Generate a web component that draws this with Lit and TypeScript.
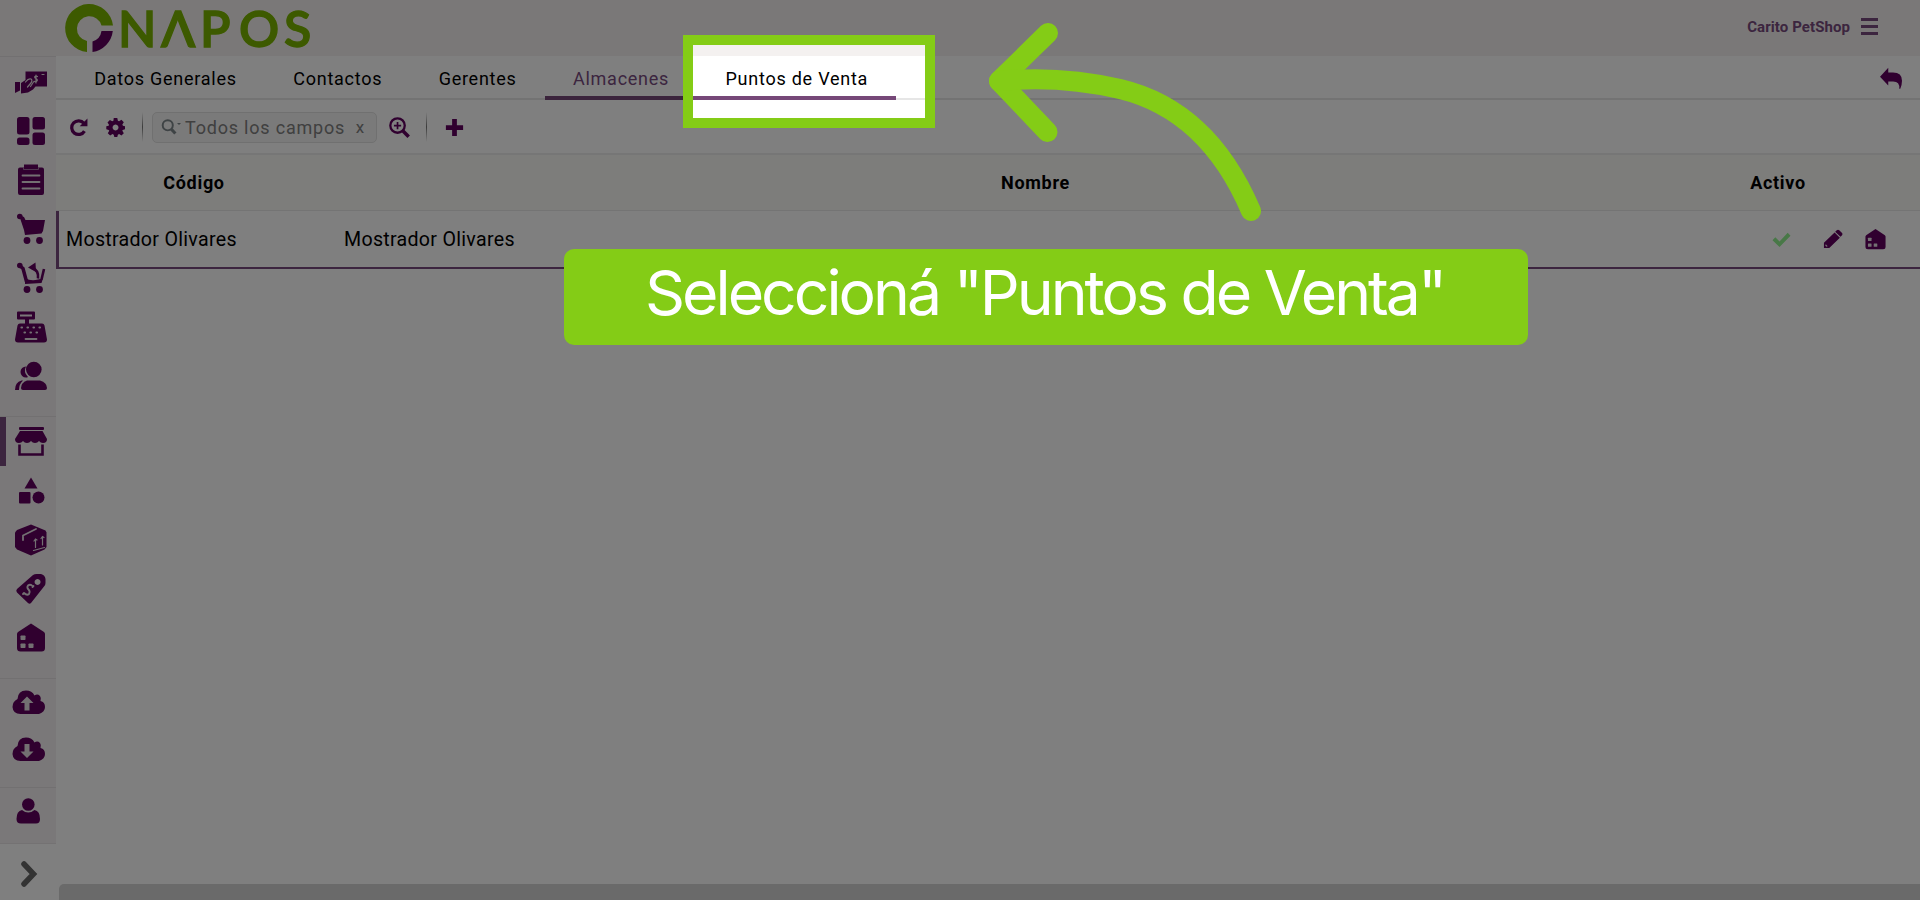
import { LitElement, css, html, svg, nothing } from "lit";
import { customElement, property } from "lit/decorators.js";
import { classMap } from "lit/directives/class-map.js";

// All the glyphs are drawn on a 32x32 grid
const icons = {
  payments: svg`
    <path d="M10.500 5.500H32v15H20.500l-2.500 3-5 3-7 1V17l4.500-3z" />
    <path d="M0 16h5v8.500L0 27z" />
    <path class="cut-line thin" d="M10.500 16q3-4 5.500-3 2 1.500-.5 4.500l-3 3.500M18.500 16l-3 4.500" />
    <path class="cut-line thin" d="M22.500 10.500q-1.500-1-2.500 0t1 2 1 2.500-3 .3M21 9v8M27 8.500h2" />`,
  dashboard: svg`
    <rect x="2" y="2" width="12.500" height="17.500" rx="2.500" />
    <rect x="17.500" y="2" width="12.500" height="12.500" rx="2.500" />
    <rect x="2" y="22.500" width="12.500" height="7.500" rx="2.500" />
    <rect x="17.500" y="17.500" width="12.500" height="12.500" rx="2.500" />`,
  clipboard: svg`
    <path d="M9 0.500h14v3h4q2 0 2 2V29q0 2-2 2H5q-2 0-2-2V5.500q0-2 2-2h4z" />
    <path class="cut-line" d="M7.500 11.500h17M7.500 18h17M7.500 24.500h17" />
    <path class="cut-line faint" d="M8.500 4v1.500h15V4" />`,
  cart: svg`
    <circle cx="4.800" cy="3.500" r="2.800" />
    <path d="M4 2l5 2 1.500 3H30l-2 11-1.500 2.500L10 22l-1-5L5 5z" />
    <circle cx="12" cy="27.500" r="3.400" /><circle cx="24.500" cy="27.500" r="3.400" />`,
  cartReturn: svg`
    <circle cx="4.800" cy="3.500" r="2.800" />
    <path class="line" d="M5 4l3 2.500 3.500 13" />
    <path class="line medium" d="M29 7l-2.500 10.500" />
    <path d="M10 16q6 3.500 13 1.500l5-1-1.500 4.500L10 22z" />
    <path class="line medium" d="M17 6q7 2 6 10.500" />
    <path d="M13 5.500L20.500 0.500 21 10z" />
    <circle cx="12" cy="27.500" r="3.400" /><circle cx="24.500" cy="27.500" r="3.400" />`,
  register: svg`
    <path fill-rule="evenodd" d="M3 0.500h16q1 0 1 1v6q0 1-1 1h-5v4h13q2 0 2.500 2l2.500 14q0 3-3 3H3q-3 0-3-3l2.500-14q.5-2 2.500-2h5v-4H3q-1 0-1-1v-6q0-1 1-1zM5 3.500v2h12v-2z" />
    <path class="cut-line dots" d="M6.500 16.500h20M9.500 21.500h14" />
    <path class="cut-line" d="M10.500 28h11" />`,
  people: svg`
    <path d="M11 6.500a5.500 5.500 0 0 0 0 11q1 0 2-.5-5-5-2-10.500zM6.500 20.500Q0 22 0 30h4q0-6 4-9.500z" />
    <circle cx="18.800" cy="9.500" r="7.800" />
    <path d="M12 20.500h13q7 2 7 7.500 0 2-2 2H8q-2 0-2-2 0-5.500 6-7.500z" />`,
  store: svg`
    <rect x="4" y="1" width="25" height="3" rx="1" />
    <path d="M5 5h22.500l4.500 8q0 4-4 4-2.500 0-4-2-1.500 2-4 2t-4-2q-1.500 2-4 2t-4-2q-1.500 2-4 2-4 0-4-4z" />
    <path class="line medium" d="M4.500 18.500v10h23v-10" />`,
  shapes: svg`
    <path d="M16 2.500l6.500 11h-13z" />
    <rect x="4" y="17" width="11.500" height="11.500" rx="1" />
    <circle cx="23.500" cy="22.500" r="6" />`,
  box: svg`
    <path d="M16 0.500l14.500 6 1 2v14.500l-2 2.500L16 31.500 2 25.500l-2-2.500V8.500l2-2.500z" />
    <path class="cut-line" d="M8 16v-4.500l13-6.500" />
    <path class="cut-line thin" d="M20.500 23.500v-8M27.500 21v-8M19 17l1.500-2 1.500 1M26 14.500l1.500-2 1.500 1M18.500 26.500l11-3" />`,
  tag: svg`
    <path fill-rule="evenodd" d="M18 2q2-1.500 5-1h3q4 1 4.500 5v4q0 2-1.500 3.500L16 30q-1.500 1.500-3 0L2 19.500q-1.500-2 0-3.500zM22.500 6a3 3 0 1 0 .1 0z" />
    <path class="cut-line" d="M18 13.500q-2.500-3-5-1-1.500 2 .5 4t.5 4.500q-2 2-5-1M18.500 13l-1 1M8 21l1-1" />`,
  warehouse: svg`
    <path d="M16 1.500l13 8.500q1 1 1 2v14q0 3.500-3.500 3.500h-21Q2 29.500 2 26V12q0-1 1-2z" />
    <rect class="cut" x="5.500" y="13.500" width="5" height="4.500" rx=".7" />
    <rect class="cut" x="5.500" y="21.500" width="5" height="4.500" rx=".7" />
    <rect class="cut" x="13.500" y="21.500" width="5" height="4.500" rx=".7" />`,
  cloudUp: svg`
    <path d="M5.500 28Q-2 28-2.500 21q0-5.500 5-8Q3 4.500 11 4.500q6 0 8.500 5 3-2 5.500.500 1.500 2 .5 5 4.500 1 4.500 6t-6 7z" />
    <path class="cut" d="M12 10.500l6.500 6.500h-4v7.500h-5V17h-4z" />`,
  cloudDown: svg`
    <path d="M5.500 28Q-2 28-2.500 21q0-5.500 5-8Q3 4.500 11 4.500q6 0 8.500 5 3-2 5.500.500 1.500 2 .5 5 4.500 1 4.500 6t-6 7z" />
    <path class="cut" d="M12 25l6.500-6.500h-4V11h-5v7.500h-4z" />`,
  person: svg`
    <circle cx="13.300" cy="9.500" r="6.300" />
    <path d="M7 15q6.300 5 12.500 0 5.500 1 5.500 9 0 4.500-4 4.500H6q-4.500 0-4.500-4.500 0-8 5.500-9z" />`,
  chevron: svg`<path class="line gray" d="M9 6l9.500 10L9 26" />`,
  refresh: svg`
    <path class="line wide" d="M26 22a11.500 11.500 0 1 1-1-13" />
    <path d="M31 1v13H18z" />`,
  gear: svg`
    <path fill-rule="evenodd" d="M13 0h6l1 4.500 2 1 4-2.500 4 4-2.500 4 1 2 3.500 1v5l-4 1-.5 1.500 2.500 4-4 4-4-2.500-2 1-1 4h-5l-1-4-2-1-4 2.500-4-4 2.500-4-1-1.500-4-1v-5l4-1 .5-1.500-2.500-4 4-4 4 2 2-1zM16 11a5 5 0 1 0 .1 0z" />`,
  search: svg`
    <circle class="line" cx="12" cy="13" r="9" />
    <path class="line wide" d="M18.500 20l7 7.500" />`,
  zoomIn: svg`
    <circle class="line" cx="13" cy="13" r="11" />
    <path class="line medium" d="M13 7.500v11M7.500 13h11" />
    <path class="line wide" d="M21 21l9 9" />`,
  plus: svg`<path d="M12 1.500h8V12h10.500v8H20v10.500h-8V20H1.500v-8H12z" />`,
  reply: svg`<path d="M12 1v7h7q13 0 13 12 0 6-2.500 11.500H28q1-10.500-9-10.500h-7v6L0 14z" />`,
  check: svg`<path d="M5 13l7.500 7.500L27 5l5 5-19.500 20L0 18z" />`,
  pencil: svg`
    <path d="M22 2q2-2 4 0l4.500 4.500q1.500 1.500 0 3.500L28 12.500 19.500 4.500zM18.500 5.500l8.500 8.500L10 30.500H1.500V22z" />
    <path class="cut" d="M4.500 24.500l3 3-2 1-2-2z" />`,
};

type IconName = keyof typeof icons;

@customElement("onapos-icon")
export class OnaposIcon extends LitElement {
  @property() name: IconName = "plus";

  static styles = css`
    :host {
      display: block;
      width: 32px;
      height: 32px;
      color: #60005f;
      flex: none;
    }
    svg {
      display: block;
      width: 100%;
      height: 100%;
      overflow: visible;
      fill: currentColor;
    }
    .cut {
      fill: #e6e0e4;
    }
    .cut-line,
    .line {
      fill: none;
      stroke: currentColor;
      stroke-width: 3.5;
    }
    .cut-line {
      stroke: #e6e0e4;
      stroke-width: 1.8;
      stroke-linecap: round;
    }
    .cut-line.thin {
      stroke-width: 1.2;
    }
    .cut-line.faint {
      stroke: #b08cb0;
      stroke-width: 0.8;
    }
    .cut-line.dots {
      stroke-width: 2.2;
      stroke-dasharray: 0.5 5.5;
    }
    .medium {
      stroke-width: 2.6;
    }
    .wide {
      stroke-width: 5.5;
    }
    .gray {
      stroke: #666;
      stroke-width: 5.5;
      stroke-linecap: round;
    }
  `;

  render() {
    return html`<svg viewBox="0 0 32 32">${icons[this.name] ?? nothing}</svg>`;
  }
}

@customElement("onapos-sidebar")
export class OnaposSidebar extends LitElement {
  groups: IconName[][] = [
    ["payments", "dashboard", "clipboard", "cart", "cartReturn", "register", "people"],
    ["store", "shapes", "box", "tag", "warehouse"],
    ["cloudUp", "cloudDown"],
    ["person"],
  ];

  static styles = css`
    :host {
      display: flex;
      flex-direction: column;
      width: 56px;
      background: #f5f0f2;
    }
    .group {
      box-sizing: border-box;
      border-top: 1px solid #e4e0e2;
      height: 56px;
    }
    .group:nth-child(1) {
      height: 360px;
    }
    .group:nth-child(2) {
      height: 262px;
    }
    .group:nth-child(3) {
      height: 109px;
    }
    .item {
      box-sizing: border-box;
      display: flex;
      align-items: center;
      height: 49px;
      padding-left: 15px;
      border-left: 0 solid #784a7e;
    }
    .group:nth-child(n + 3) .item {
      height: 46.5px;
    }
    .item.active {
      border-left-width: 6px;
      padding-left: 9px;
      border-radius: 0 3px 3px 0;
    }
    .toggle {
      display: flex;
      flex: 1;
      align-items: center;
      padding: 4px 0 0 15px;
      background: #fff;
      border-top: 1px solid #e8e5e7;
    }
  `;

  render() {
    return html`
      ${this.groups.map(
        (group) => html`
          <div class="group">
            ${group.map(
              (name) => html`
                <div class=${classMap({ item: true, active: name === "store" })}>
                  <onapos-icon name=${name}></onapos-icon>
                </div>
              `,
            )}
          </div>
        `,
      )}
      <div class="toggle"><onapos-icon name="chevron"></onapos-icon></div>
    `;
  }
}

@customElement("app-root")
export class AppRoot extends LitElement {
  tabs = ["Datos Generales", "Contactos", "Gerentes", "Almacenes", "Puntos de Venta"];
  rows = [{ code: "Mostrador Olivares", name: "Mostrador Olivares" }];

  static styles = css`
    :host {
      position: relative;
      display: flex;
      flex-direction: column;
      width: 1920px;
      height: 900px;
      overflow: hidden;
      background: #fff;
      color: #000;
      font-family: Roboto, "Liberation Sans", sans-serif;
      font-size: 18px;
    }
    header {
      box-sizing: border-box;
      display: flex;
      align-items: center;
      justify-content: space-between;
      height: 56px;
      padding: 0 42px 0 64px;
      background: #f4f1f0;
    }
    .logo {
      width: 280px;
      height: 56px;
      overflow: visible;
      fill: #7ab400;
      font: 600 50px/56px Lato, sans-serif;
    }
    .logo text {
      stroke: #7ab400;
      stroke-width: 1.3;
    }
    .logo .accent {
      fill: #60005f;
    }
    .account {
      display: flex;
      align-items: center;
      gap: 11px;
      padding-bottom: 3px;
      color: #784a7e;
      font-size: 15px;
      font-weight: 700;
      letter-spacing: 0.08px;
    }
    .menu {
      display: grid;
      gap: 4px;
      width: 17px;
    }
    .menu i {
      height: 3px;
      background: #784a7e;
    }
    .body {
      display: flex;
      flex: 1;
    }
    main {
      display: flex;
      flex: 1;
      flex-direction: column;
      min-width: 0;
    }
    nav {
      box-sizing: border-box;
      display: flex;
      height: 44px;
      padding: 0 18px 0 10px;
      border-bottom: 2px solid #e6e6e6;
    }
    .tab {
      box-sizing: border-box;
      height: 44px;
      padding: 0 28.2px;
      border-bottom: 4px solid transparent;
      letter-spacing: 0.75px;
      line-height: 45px;
      white-space: nowrap;
    }
    .tab.marked {
      border-color: #764878;
    }
    .tab.active {
      color: #784a7e;
    }
    .back {
      width: 22px;
      height: 22px;
      margin: 11px 0 0 auto;
    }
    .toolbar {
      box-sizing: border-box;
      display: flex;
      align-items: center;
      height: 55px;
      padding: 1px 0 0 13px;
      border-bottom: 2px solid #ececec;
    }
    .tool {
      width: 19px;
      height: 19px;
      margin-right: 17.5px;
    }
    .divider {
      width: 1px;
      height: 30px;
      margin-right: 9px;
      background: linear-gradient(#fff, #777, #fff);
    }
    .search {
      box-sizing: border-box;
      display: flex;
      align-items: center;
      width: 225px;
      height: 31px;
      margin-right: 12px;
      padding: 0 11px 0 8px;
      border: 1px solid #e0e0e0;
      border-radius: 5px;
      background: #f4f4f4;
      color: #808080;
      letter-spacing: 0.8px;
    }
    .search onapos-icon {
      width: 18px;
      height: 18px;
      color: #7d868a;
    }
    .caret {
      margin: -5px 4px 0 -2px;
      border: 2.5px solid transparent;
      border-top-color: #7d868a;
    }
    .clear {
      margin-left: auto;
      font-size: 17px;
    }
    .zoom {
      width: 21px;
      height: 21px;
      margin-right: 16px;
    }
    .divider.wide {
      margin-right: 17.5px;
    }
    .grid {
      box-sizing: border-box;
      display: grid;
      grid-template-columns: 276px 1407px 78px 1fr;
      align-items: center;
    }
    .head {
      height: 56px;
      border-bottom: 1px solid #e8e8e8;
      background: #fafaf7;
      font-weight: 700;
      letter-spacing: 0.7px;
      text-align: center;
    }
    .row {
      height: 58px;
      border-left: 3px solid #784a7e;
      border-bottom: 2px solid #784a7e;
      grid-template-columns: 278px 1fr auto;
      font-size: 19.6px;
      letter-spacing: 0.3px;
    }
    .row span {
      padding-left: 7px;
    }
    .actions {
      display: flex;
      align-items: center;
      padding-right: 33px;
    }
    .ok {
      width: 23px;
      height: 18px;
      margin-right: 30px;
      color: #90f08e;
    }
    .edit {
      width: 20px;
      height: 20px;
      margin-right: 21px;
    }
    .house {
      width: 23px;
      height: 23px;
    }
    .scrollbar {
      height: 16px;
      margin: auto 0 0 3px;
      border-radius: 5px 0 0 0;
      background: #d4d4d4;
    }
    .spotlight {
      position: absolute;
      left: 683px;
      top: 35px;
      box-sizing: border-box;
      width: 252px;
      height: 93px;
      border: 10px solid #84cc16;
      box-shadow: 0 0 0 2000px rgba(0, 0, 0, 0.5);
    }
    .arrow {
      position: absolute;
      left: 960px;
      top: 10px;
      width: 340px;
      height: 240px;
      fill: none;
      stroke: #84cc16;
      stroke-width: 20;
      stroke-linecap: round;
      stroke-linejoin: round;
    }
    .callout {
      position: absolute;
      left: 564px;
      top: 249px;
      box-sizing: border-box;
      width: 964px;
      height: 96px;
      padding-right: 3px;
      border-radius: 10px;
      background: #84cc16;
      color: #fff;
      font: 400 62.5px/86px Inter, sans-serif;
      letter-spacing: -3px;
      text-align: center;
      white-space: nowrap;
    }
  `;

  renderTab(label: string) {
    const classes = {
      tab: true,
      active: label === "Almacenes",
      marked: label === "Almacenes" || label === "Puntos de Venta",
    };
    return html`<div class=${classMap(classes)}>${label}</div>`;
  }

  render() {
    return html`
      <header>
        <svg class="logo" viewBox="64 0 280 56">
          <path d="M113 25.500A24 24 0 1 0 87 52V41A12.500 12.500 0 1 1 101.500 25.500z" />
          <path class="accent" d="M112.800 31A24 24 0 0 1 92.500 52V41.500A13 13 0 0 0 101.500 31z" />
          <text x="118 161 200 239 284" y="46.500">NΛPOS</text>
        </svg>
        <div class="account">
          <span>Carito PetShop</span>
          <div class="menu"><i></i><i></i><i></i></div>
        </div>
      </header>
      <div class="body">
        <onapos-sidebar></onapos-sidebar>
        <main>
          <nav>
            ${this.tabs.map((label) => this.renderTab(label))}
            <onapos-icon class="back" name="reply"></onapos-icon>
          </nav>
          <div class="toolbar">
            <onapos-icon class="tool" name="refresh"></onapos-icon>
            <onapos-icon class="tool" name="gear"></onapos-icon>
            <div class="divider"></div>
            <div class="search">
              <onapos-icon name="search"></onapos-icon>
              <i class="caret"></i>
              <span>Todos los campos</span>
              <span class="clear">x</span>
            </div>
            <onapos-icon class="zoom" name="zoomIn"></onapos-icon>
            <div class="divider wide"></div>
            <onapos-icon class="tool" name="plus"></onapos-icon>
          </div>
          <div class="grid head">
            <span>Código</span>
            <span>Nombre</span>
            <span>Activo</span>
          </div>
          ${this.rows.map(
            (row) => html`
              <div class="grid row">
                <span>${row.code}</span>
                <span>${row.name}</span>
                <div class="actions">
                  <onapos-icon class="ok" name="check"></onapos-icon>
                  <onapos-icon class="edit" name="pencil"></onapos-icon>
                  <onapos-icon class="house" name="warehouse"></onapos-icon>
                </div>
              </div>
            `,
          )}
          <div class="scrollbar"></div>
        </main>
      </div>
      <div class="spotlight"></div>
      <svg class="arrow" viewBox="0 0 340 240">
        <path d="M88 23L39 71l48.500 51" />
        <path d="M39 71Q100 65 160 79Q248 100 291 201" />
      </svg>
      <div class="callout">Seleccioná "Puntos de Venta"</div>
    `;
  }
}
